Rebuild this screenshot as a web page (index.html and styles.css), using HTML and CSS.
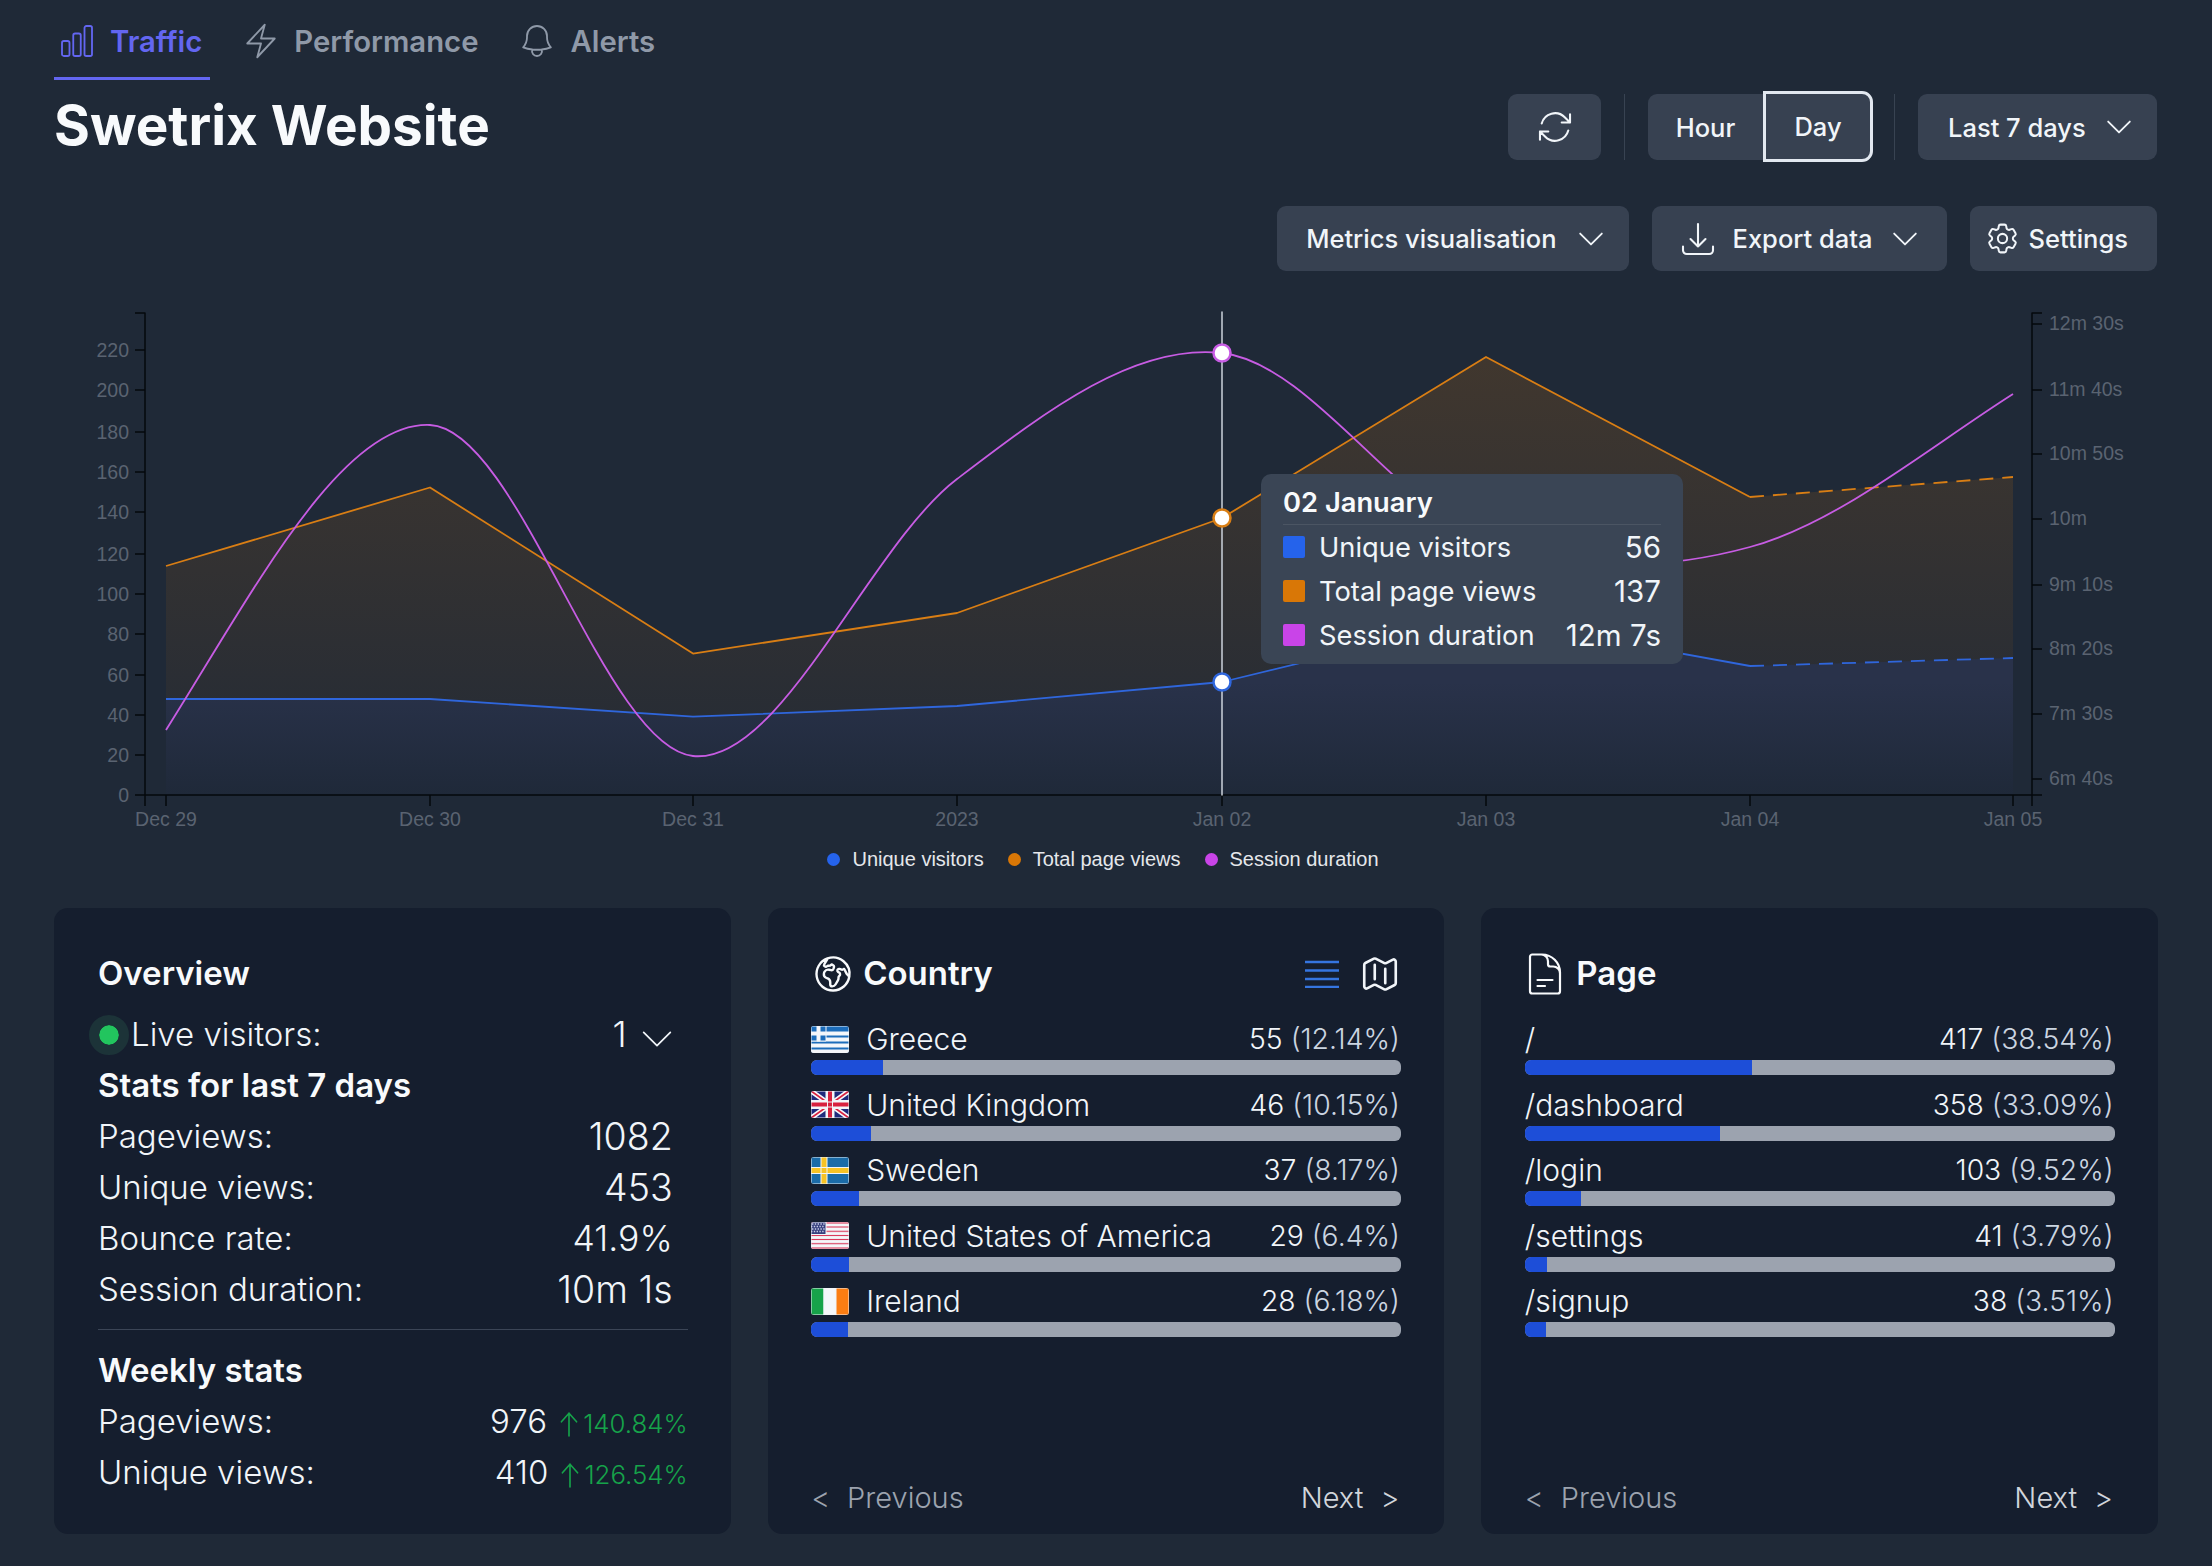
FILE: index.html
```html
<!DOCTYPE html>
<html lang="en">
<head>
    <meta charset="UTF-8">
    <title>Swetrix Website</title>
    <link rel="stylesheet" href="styles.css">
</head>
<body>
    <nav class="tabs">
        <a class="tab tab-active">
            <svg class="tab-icon" viewBox="0 0 24 24"><path d="M3 13.125C3 12.504 3.504 12 4.125 12h2.25c.621 0 1.125.504 1.125 1.125v6.75C7.5 20.496 6.996 21 6.375 21h-2.25A1.125 1.125 0 013 19.875v-6.75zM9.75 8.625c0-.621.504-1.125 1.125-1.125h2.25c.621 0 1.125.504 1.125 1.125v11.25c0 .621-.504 1.125-1.125 1.125h-2.25a1.125 1.125 0 01-1.125-1.125V8.625zM16.5 4.125c0-.621.504-1.125 1.125-1.125h2.25C20.496 3 21 3.504 21 4.125v15.75c0 .621-.504 1.125-1.125 1.125h-2.25a1.125 1.125 0 01-1.125-1.125V4.125z"/></svg>
            Traffic
        </a>
        <a class="tab">
            <svg class="tab-icon" viewBox="0 0 24 24"><path d="M3.75 13.5l10.5-11.25L12 10.5h8.25L9.75 21.75 12 13.5H3.75z"/></svg>
            Performance
        </a>
        <a class="tab">
            <svg class="tab-icon" viewBox="0 0 24 24"><path d="M14.857 17.082a23.848 23.848 0 005.454-1.31A8.967 8.967 0 0118 9.75v-.7V9A6 6 0 006 9v.75a8.967 8.967 0 01-2.312 6.022c1.733.64 3.56 1.085 5.455 1.31m5.714 0a24.255 24.255 0 01-5.714 0m5.714 0a3 3 0 11-5.714 0"/></svg>
            Alerts
        </a>
    </nav>

    <header class="title-row">
        <h1>Swetrix Website</h1>
        <div class="toolbar">
            <button class="btn btn-refresh">
                <svg class="icon-refresh" viewBox="0 0 24 24"><path d="M16.023 9.348h4.992v-.001M2.985 19.644v-4.992m0 0h4.992m-4.993 0l3.181 3.183a8.25 8.25 0 0013.803-3.7M4.031 9.865a8.25 8.25 0 0113.803-3.7l3.181 3.182m0-4.991v4.99"/></svg>
            </button>
            <span class="divider"></span>
            <div class="btn-group">
                <button class="btn btn-hour">Hour</button>
                <button class="btn btn-day">Day</button>
            </div>
            <span class="divider divider-right"></span>
            <button class="btn btn-select">Last 7 days
                <svg class="chevron" viewBox="0 0 24 24"><path d="M22 7L12 17 2 7"/></svg>
            </button>
        </div>
    </header>

    <div class="actions">
        <button class="btn btn-metrics">Metrics visualisation
            <svg class="chevron" viewBox="0 0 24 24"><path d="M22 7L12 17 2 7"/></svg>
        </button>
        <button class="btn btn-export">
            <svg class="icon-export" viewBox="0 0 24 24"><path d="M3 16.5v2.25A2.25 2.25 0 005.25 21h13.5A2.25 2.25 0 0021 18.75V16.5M16.5 12L12 16.5m0 0L7.5 12m4.5 4.5V3"/></svg>
            Export data
            <svg class="chevron chevron-export" viewBox="0 0 24 24"><path d="M22 7L12 17 2 7"/></svg>
        </button>
        <button class="btn btn-settings">
            <svg class="icon-settings" viewBox="0 0 24 24"><path d="M9.594 3.94c.09-.542.56-.94 1.11-.94h2.593c.55 0 1.02.398 1.11.94l.213 1.281c.063.374.313.686.645.87.074.04.147.083.22.127.324.196.72.257 1.075.124l1.217-.456a1.125 1.125 0 011.37.49l1.296 2.247a1.125 1.125 0 01-.26 1.431l-1.003.827c-.293.24-.438.613-.431.992a6.759 6.759 0 010 .255c-.007.378.138.75.43.99l1.005.828c.424.35.534.954.26 1.43l-1.298 2.247a1.125 1.125 0 01-1.369.491l-1.217-.456c-.355-.133-.75-.072-1.076.124a6.57 6.57 0 01-.22.128c-.331.183-.581.495-.644.869l-.213 1.28c-.09.543-.56.941-1.11.941h-2.594c-.55 0-1.02-.398-1.11-.94l-.213-1.281c-.062-.374-.312-.686-.644-.87a6.52 6.52 0 01-.22-.127c-.325-.196-.72-.257-1.076-.124l-1.217.456a1.125 1.125 0 01-1.369-.49l-1.297-2.247a1.125 1.125 0 01.26-1.431l1.004-.827c.292-.24.437-.613.43-.992a6.932 6.932 0 010-.255c.007-.378-.138-.75-.43-.99l-1.004-.828a1.125 1.125 0 01-.26-1.43l1.297-2.247a1.125 1.125 0 011.37-.491l1.216.456c.356.133.751.072 1.076-.124.072-.044.146-.087.22-.128.332-.183.582-.495.644-.869l.214-1.281z"/><path d="M15 12a3 3 0 11-6 0 3 3 0 016 0z"/></svg>
            Settings
        </button>
    </div>

    <section class="chart">
        <svg class="chart-svg" viewBox="54 285 2104 560">
            <defs>
                <linearGradient id="area-orange" gradientUnits="userSpaceOnUse" x1="0" y1="357" x2="0" y2="795">
                    <stop offset="0" stop-color="#d97706" stop-opacity="0.18"/>
                    <stop offset="1" stop-color="#d97706" stop-opacity="0.02"/>
                </linearGradient>
                <linearGradient id="area-blue" gradientUnits="userSpaceOnUse" x1="0" y1="682" x2="0" y2="795">
                    <stop offset="0" stop-color="#29324a"/>
                    <stop offset="1" stop-color="#1f2939"/>
                </linearGradient>
            </defs>

            <path class="area" fill="url(#area-orange)" d="M166 566L430 487.5 693 653.6 957 613 1222 518 1486 357 1750 497 2013 477V795H166Z"/>
            <path class="area" fill="url(#area-blue)" d="M166 699L430 699 693 716.7 957 706 1222 682 1486 618 1750 666 2013 658V795H166Z"/>

            <path class="axis" d="M135 313H145V795H135M135 350H145M135 390H145M135 432H145M135 472H145M135 512H145M135 554H145M135 594H145M135 634H145M135 675H145M135 715H145M135 755H145"/>
            <path class="axis" d="M2042 313H2032V806M2042 324H2032M2042 390H2032M2042 454H2032M2042 519H2032M2042 585H2032M2042 649H2032M2042 714H2032M2042 779H2032M2042 795H145V806"/>
            <path class="axis" d="M166 795V806M430 795V806M693 795V806M957 795V806M1222 795V806M1486 795V806M1750 795V806M2013 795V806"/>

            <g class="tick-label tick-left">
                <text x="129" y="357">220</text>
                <text x="129" y="397">200</text>
                <text x="129" y="439">180</text>
                <text x="129" y="479">160</text>
                <text x="129" y="519">140</text>
                <text x="129" y="561">120</text>
                <text x="129" y="601">100</text>
                <text x="129" y="641">80</text>
                <text x="129" y="682">60</text>
                <text x="129" y="722">40</text>
                <text x="129" y="762">20</text>
                <text x="129" y="802">0</text>
            </g>
            <g class="tick-label">
                <text x="2049" y="330">12m 30s</text>
                <text x="2049" y="396">11m 40s</text>
                <text x="2049" y="460">10m 50s</text>
                <text x="2049" y="525">10m</text>
                <text x="2049" y="591">9m 10s</text>
                <text x="2049" y="655">8m 20s</text>
                <text x="2049" y="720">7m 30s</text>
                <text x="2049" y="785">6m 40s</text>
            </g>
            <g class="tick-label tick-bottom">
                <text x="166" y="826">Dec 29</text>
                <text x="430" y="826">Dec 30</text>
                <text x="693" y="826">Dec 31</text>
                <text x="957" y="826">2023</text>
                <text x="1222" y="826">Jan 02</text>
                <text x="1486" y="826">Jan 03</text>
                <text x="1750" y="826">Jan 04</text>
                <text x="2013" y="826">Jan 05</text>
            </g>

            <path class="line line-orange" d="M166 566L430 487.5 693 653.6 957 613 1222 518 1486 357 1750 497"/>
            <path class="line line-orange line-dash" d="M1750 497L2013 477"/>
            <path class="line line-blue" d="M166 699L430 699 693 716.7 957 706 1222 682 1486 618 1750 666"/>
            <path class="line line-blue line-dash" d="M1750 666L2013 658"/>
            <path class="line line-purple" d="M166 730C254 590 342 421 430 425C518 429 605 747 693 756C781 765 869 546 957 479C1045 412 1134 343 1222 353C1310 363 1398 508 1486 540C1574 572 1662 571 1750 547C1838 523 1925 450 2013 394"/>

            <path class="guide" d="M1222 312V795"/>
            <circle class="point point-purple" cx="1222" cy="353" r="8.5"/>
            <circle class="point point-orange" cx="1222" cy="518" r="8.5"/>
            <circle class="point point-blue" cx="1222" cy="682" r="8.5"/>
        </svg>

        <div class="tooltip">
            <div class="tooltip-title">02 January</div>
            <div class="tooltip-row"><i class="swatch swatch-blue"></i><span class="tooltip-name">Unique visitors</span><span class="tooltip-value">56</span></div>
            <div class="tooltip-row"><i class="swatch swatch-orange"></i><span class="tooltip-name">Total page views</span><span class="tooltip-value">137</span></div>
            <div class="tooltip-row"><i class="swatch swatch-purple"></i><span class="tooltip-name">Session duration</span><span class="tooltip-value">12m 7s</span></div>
        </div>

        <div class="legend">
            <span class="legend-item"><i class="legend-dot swatch-blue"></i>Unique visitors</span>
            <span class="legend-item"><i class="legend-dot swatch-orange"></i>Total page views</span>
            <span class="legend-item"><i class="legend-dot swatch-purple"></i>Session duration</span>
        </div>
    </section>

    <main class="cards">
        <section class="card card-overview">
            <h2 class="card-title">Overview</h2>
            <div class="stat stat-live">
                <span class="live-label"><span class="live-dot"></span>Live visitors:</span>
                <span class="live-value">1
                    <svg class="chevron chevron-live" viewBox="0 0 24 24"><path d="M22 7L12 17 2 7"/></svg>
                </span>
            </div>
            <h3 class="stat-heading">Stats for last 7 days</h3>
            <div class="stat"><span>Pageviews:</span><span class="stat-value">1082</span></div>
            <div class="stat"><span>Unique views:</span><span class="stat-value">453</span></div>
            <div class="stat"><span>Bounce rate:</span><span class="stat-value stat-value-rate">41.9%</span></div>
            <div class="stat"><span>Session duration:</span><span class="stat-value">10m 1s</span></div>
            <hr class="rule">
            <h3 class="stat-heading">Weekly stats</h3>
            <div class="stat stat-weekly">
                <span>Pageviews:</span>
                <span class="weekly-value">976
                    <span class="growth"><svg class="arrow-up" viewBox="0 0 18 24"><path d="M2 10L9 2l7 8M9 2v21"/></svg>140.84%</span>
                </span>
            </div>
            <div class="stat stat-weekly">
                <span>Unique views:</span>
                <span class="weekly-value">410
                    <span class="growth"><svg class="arrow-up" viewBox="0 0 18 24"><path d="M2 10L9 2l7 8M9 2v21"/></svg>126.54%</span>
                </span>
            </div>
        </section>

        <section class="card">
            <div class="card-head">
                <h2 class="card-title">
                    <svg class="head-icon" viewBox="0 0 24 24"><path d="M20.893 13.393l-1.135-1.135a2.252 2.252 0 01-.421-.585l-1.08-2.16a.414.414 0 00-.663-.107.827.827 0 01-.812.21l-1.273-.363a.89.89 0 00-.738 1.595l.587.39c.59.395.674 1.23.172 1.732l-.2.2c-.212.212-.33.498-.33.796v.41c0 .409-.11.809-.32 1.158l-1.315 2.191a2.11 2.11 0 01-1.81 1.025 1.055 1.055 0 01-1.055-1.055v-1.172c0-.92-.56-1.747-1.414-2.089l-.655-.261a2.25 2.25 0 01-1.383-2.46l.007-.042a2.25 2.25 0 01.29-.787l.09-.15a2.25 2.25 0 012.37-1.048l1.178.236a1.125 1.125 0 001.302-.795l.208-.73a1.125 1.125 0 00-.578-1.315l-.665-.332-.091.091a2.25 2.25 0 01-1.591.659h-.18c-.249 0-.487.1-.662.274a.931.931 0 01-1.458-1.137l1.411-2.353a2.25 2.25 0 00.286-.76m11.928 9.869A9 9 0 008.965 3.525m11.928 9.868A9 9 0 118.965 3.525"/></svg>
                    Country
                </h2>
                <div class="head-tools">
                    <svg class="tool-list" viewBox="0 0 34 28"><path d="M0 2h34M0 10.500h34M0 19h34M0 27h34"/></svg>
                    <svg class="tool-map" viewBox="0 0 24 24"><path d="M9 6.750V15m6-6v8.250m.503 3.498l4.875-2.437c.381-.19.622-.58.622-1.006V4.820c0-.836-.88-1.380-1.628-1.006l-3.869 1.934c-.317.159-.69.159-1.006 0L9.503 3.252a1.125 1.125 0 00-1.006 0L3.622 5.689C3.240 5.880 3 6.270 3 6.695V19.180c0 .836.88 1.380 1.628 1.006l3.869-1.934c.317-.159.69-.159 1.006 0l4.994 2.497c.317.158.69.158 1.006 0z"/></svg>
                </div>
            </div>
            <div class="list">
                <div class="row">
                    <div class="row-text">
                        <span class="row-name">
                            <svg class="flag" viewBox="0 0 38 27"><rect width="38" height="27" fill="#1c6dbb"/><path fill="#f5f7fa" d="M0 6h38v3H0zM0 12h38v3H0zM0 18h38v3H0zM0 24h38v3H0z"/><path fill="#1c6dbb" d="M0 0h15v15H0z"/><path fill="#f5f7fa" d="M6 0h3v15H6zM0 6h15v3H0z"/></svg>
                            Greece
                        </span>
                        <span class="row-value">55 <em>(12.14%)</em></span>
                    </div>
                    <div class="bar"><div class="bar-fill" style="width: 12.14%"></div></div>
                </div>
                <div class="row">
                    <div class="row-text">
                        <span class="row-name">
                            <svg class="flag" viewBox="0 0 38 27"><rect width="38" height="27" fill="#1f2a7c"/><path stroke="#f5f7fa" stroke-width="5" d="M0 0l38 27M38 0L0 27"/><path stroke="#d8213f" stroke-width="1.800" d="M0 0l38 27M38 0L0 27"/><path fill="#f5f7fa" d="M15 0h8v27h-8zM0 9.500h38v8H0z"/><path fill="#d8213f" d="M16.500 0h5v27h-5zM0 11h38v5H0z"/></svg>
                            United Kingdom
                        </span>
                        <span class="row-value">46 <em>(10.15%)</em></span>
                    </div>
                    <div class="bar"><div class="bar-fill" style="width: 10.15%"></div></div>
                </div>
                <div class="row">
                    <div class="row-text">
                        <span class="row-name">
                            <svg class="flag" viewBox="0 0 38 27"><rect width="38" height="27" fill="#1b6ca8"/><path fill="#f7c325" d="M10 0h6v27h-6zM0 10.500h38v6H0z"/></svg>
                            Sweden
                        </span>
                        <span class="row-value">37 <em>(8.17%)</em></span>
                    </div>
                    <div class="bar"><div class="bar-fill" style="width: 8.17%"></div></div>
                </div>
                <div class="row">
                    <div class="row-text">
                        <span class="row-name">
                            <svg class="flag" viewBox="0 0 38 27"><rect width="38" height="27" fill="#f5f7fa"/><path fill="#d8264a" d="M0 0h38v2H0zM0 4h38v2H0zM0 8.200h38v2H0zM0 12.400h38v2H0zM0 16.600h38v2H0zM0 20.800h38v2H0zM0 25h38v2H0z"/><rect width="15" height="12.500" fill="#37407f"/><path stroke="#c8cde6" stroke-width="1.400" stroke-dasharray="1.400 1.400" d="M1 2h14M0 4.500h14M1 7h14M0 9.500h14"/></svg>
                            United States of America
                        </span>
                        <span class="row-value">29 <em>(6.4%)</em></span>
                    </div>
                    <div class="bar"><div class="bar-fill" style="width: 6.4%"></div></div>
                </div>
                <div class="row">
                    <div class="row-text">
                        <span class="row-name">
                            <svg class="flag" viewBox="0 0 38 27"><rect width="13" height="27" fill="#17a34a"/><rect x="13" width="12" height="27" fill="#f5f7fa"/><rect x="25" width="13" height="27" fill="#fb7d12"/></svg>
                            Ireland
                        </span>
                        <span class="row-value">28 <em>(6.18%)</em></span>
                    </div>
                    <div class="bar"><div class="bar-fill" style="width: 6.18%"></div></div>
                </div>
            </div>
            <div class="pager">
                <span class="pager-prev"><span class="pager-mark">&lt;</span>Previous</span>
                <span class="pager-next">Next<span class="pager-mark">&gt;</span></span>
            </div>
        </section>

        <section class="card">
            <div class="card-head">
                <h2 class="card-title card-title-page">
                    <svg class="head-icon-page" viewBox="0 0 24 24"><path d="M19.500 14.250v-2.625a3.375 3.375 0 00-3.375-3.375h-1.500A1.125 1.125 0 0113.500 7.125v-1.500a3.375 3.375 0 00-3.375-3.375H8.250m0 12.750h7.500m-7.500 3H12M10.500 2.250H5.625c-.621 0-1.125.504-1.125 1.125v17.250c0 .621.504 1.125 1.125 1.125h12.750c.621 0 1.125-.504 1.125-1.125V11.250a9 9 0 00-9-9z"/></svg>
                    Page
                </h2>
            </div>
            <div class="list">
                <div class="row">
                    <div class="row-text"><span class="row-name">/</span><span class="row-value">417 <em>(38.54%)</em></span></div>
                    <div class="bar"><div class="bar-fill" style="width: 38.54%"></div></div>
                </div>
                <div class="row">
                    <div class="row-text"><span class="row-name">/dashboard</span><span class="row-value">358 <em>(33.09%)</em></span></div>
                    <div class="bar"><div class="bar-fill" style="width: 33.09%"></div></div>
                </div>
                <div class="row">
                    <div class="row-text"><span class="row-name">/login</span><span class="row-value">103 <em>(9.52%)</em></span></div>
                    <div class="bar"><div class="bar-fill" style="width: 9.52%"></div></div>
                </div>
                <div class="row">
                    <div class="row-text"><span class="row-name">/settings</span><span class="row-value">41 <em>(3.79%)</em></span></div>
                    <div class="bar"><div class="bar-fill" style="width: 3.79%"></div></div>
                </div>
                <div class="row">
                    <div class="row-text"><span class="row-name">/signup</span><span class="row-value">38 <em>(3.51%)</em></span></div>
                    <div class="bar"><div class="bar-fill" style="width: 3.51%"></div></div>
                </div>
            </div>
            <div class="pager">
                <span class="pager-prev"><span class="pager-mark">&lt;</span>Previous</span>
                <span class="pager-next">Next<span class="pager-mark">&gt;</span></span>
            </div>
        </section>
    </main>
</body>
</html>
```

FILE: styles.css
```css
* {
    box-sizing: border-box;
}
body {
    margin: 0;
    padding: 0 54px;
    min-height: 1566px;
    background-color: #1f2937;
    color: #f1f5f9;
    font-family: Inter, "Noto Sans", sans-serif;
}
svg {
    fill: none;
    stroke: currentColor;
    stroke-linecap: round;
    stroke-linejoin: round;
    flex-shrink: 0;
}

/* Tabs */
.tabs {
    display: flex;
    gap: 28px;
    height: 80px;
}
.tab {
    display: flex;
    align-items: center;
    gap: 18px;
    height: 80px;
    padding: 5px 8px 0;
    border-bottom: 3px solid transparent;
    color: #8f99a8;
    font-size: 29.3px;
    font-weight: 600;
}
.tab-active {
    color: #6366f1;
    border-bottom-color: #6366f1;
}
.tab-icon {
    width: 40px;
    height: 40px;
    stroke-width: 1.1;
    margin: 0 -5px;
}

/* Title and toolbar */
.title-row {
    display: flex;
    justify-content: space-between;
    margin-top: 14px;
}
h1 {
    margin: 0;
    font-size: 54.8px;
    line-height: 62px;
    font-weight: 700;
    color: #f8fafc;
}
.toolbar {
    display: flex;
    align-items: center;
    margin-right: 1px;
}
.btn {
    display: flex;
    align-items: center;
    height: 66px;
    padding: 0;
    border: none;
    border-radius: 9px;
    background-color: #374151;
    color: #f1f5f9;
    font-family: inherit;
    font-size: 25.5px;
    font-weight: 450;
}
.btn-refresh {
    justify-content: center;
    width: 93px;
}
.icon-refresh {
    width: 40px;
    height: 40px;
    stroke-width: 1.25;
}
.divider {
    width: 1px;
    height: 66px;
    margin: 0 23px;
    background-color: #384352;
}
.divider-right {
    margin: 0 23px 0 21px;
}
.btn-group {
    display: flex;
}
.btn-hour {
    justify-content: center;
    width: 115px;
    border-radius: 9px 0 0 9px;
}
.btn-day {
    justify-content: center;
    width: 110px;
    height: 71px;
    margin: -3px 0;
    border: 3px solid #e2e8f0;
    border-radius: 0 11px 11px 0;
}
.btn-select {
    width: 239px;
    padding: 0 25px 0 30px;
    justify-content: space-between;
}
.chevron {
    width: 26px;
    height: 26px;
    stroke-width: 1.7;
}

.actions {
    display: flex;
    justify-content: flex-end;
    gap: 23px;
    margin-top: 46px;
    margin-right: 1px;
}
.actions .btn {
    height: 65px;
}
.btn-metrics {
    gap: 21px;
    padding: 0 25px 0 29px;
}
.btn-export {
    padding: 0 29px 0 26px;
}
.icon-export {
    width: 40px;
    height: 40px;
    margin-right: 15px;
    stroke-width: 1.25;
}
.chevron-export {
    margin-left: 19px;
}
.btn-settings {
    padding: 0 29px 0 14.5px;
}
.icon-settings {
    width: 37px;
    height: 37px;
    margin-right: 7.5px;
    stroke-width: 1.3;
}

/* Chart */
.chart {
    position: relative;
    margin-top: 14px;
}
.chart-svg {
    display: block;
    width: 2104px;
    height: 560px;
}
.area {
    stroke: none;
}
.axis {
    stroke: #05080d;
    stroke-width: 1.5;
    stroke-linecap: butt;
}
.tick-label {
    font-family: "Liberation Sans", Arial, sans-serif;
    font-size: 19.5px;
    fill: #5a6371;
    stroke: none;
}
.tick-left {
    text-anchor: end;
}
.tick-bottom {
    text-anchor: middle;
}
.line {
    stroke-width: 1.8;
    stroke-linecap: butt;
}
.line-orange {
    stroke: #d97e14;
}
.line-blue {
    stroke: #2f66dc;
}
.line-purple {
    stroke: #c75ce3;
}
.line-dash {
    stroke-dasharray: 14 9;
}
.guide {
    stroke: #cdd3dc;
    stroke-width: 1.5;
}
.point {
    fill: #ffffff;
    stroke-width: 2.5;
}
.point-purple {
    stroke: #c75ce3;
}
.point-orange {
    stroke: #d97e14;
}
.point-blue {
    stroke: #2f66dc;
}
.tooltip {
    position: absolute;
    left: 1207px;
    top: 189px;
    width: 422px;
    height: 190px;
    padding: 14px 22px 0 22px;
    border-radius: 10px;
    background-color: #3a4555;
    font-size: 27.3px;
}
.tooltip-title {
    height: 37px;
    line-height: 30px;
    border-bottom: 1px solid #4b5563;
    font-weight: 600;
    color: #f8fafc;
}
.tooltip-row {
    display: flex;
    align-items: center;
    height: 44px;
}
.tooltip-name {
    flex: 1;
    margin-left: 14px;
}
.tooltip-value {
    font-size: 29.5px;
}
.swatch {
    width: 22px;
    height: 22px;
    border-radius: 2px;
}
.swatch-blue {
    background-color: #2563eb;
}
.swatch-orange {
    background-color: #d97706;
}
.swatch-purple {
    background-color: #c944e8;
}
.legend {
    display: flex;
    justify-content: center;
    gap: 24px;
    height: 28px;
    padding-right: 6px;
    font-family: "Liberation Sans", Arial, sans-serif;
    font-size: 20px;
    line-height: 28px;
    color: #e5e7eb;
}
.legend-item {
    display: flex;
    align-items: center;
    gap: 12px;
}
.legend-dot {
    width: 13px;
    height: 13px;
    border-radius: 50%;
}

/* Cards */
.cards {
    display: grid;
    grid-template-columns: 1fr 1fr 1fr;
    gap: 37px;
    margin-top: 35px;
}
.card {
    display: flex;
    flex-direction: column;
    padding: 40px 43.5px 16px;
    border-radius: 14px;
    background-color: #151e2e;
    font-size: 33px;
    font-weight: 300;
    line-height: 51px;
}
.card-overview {
    padding: 40px 43px 36px 44px;
}
.card-title {
    display: flex;
    align-items: center;
    gap: 8px;
    margin: 0;
    font-size: 33px;
    font-weight: 600;
    line-height: 51px;
    color: #f8fafc;
}
.stat-heading {
    margin: 0;
    font-size: 33px;
    font-weight: 600;
    line-height: 51px;
    color: #f8fafc;
}
.stat {
    display: flex;
    justify-content: space-between;
    padding-right: 15px;
}
.stat-value {
    font-size: 37.5px;
}
.stat-value-rate {
    font-size: 35.5px;
}
.stat-live {
    margin-top: 10px;
}
.live-label {
    display: flex;
    align-items: center;
    gap: 2px;
    margin-left: -9px;
}
.live-dot {
    width: 40px;
    height: 40px;
    border-radius: 50%;
    border: 10.5px solid #1c3338;
    background-color: #22c55e;
    background-clip: padding-box;
}
.live-value {
    display: flex;
    align-items: center;
    gap: 14px;
    font-size: 36px;
}
.chevron-live {
    width: 32px;
    height: 32px;
    margin-top: 8px;
    stroke-width: 1.3;
}
.rule {
    width: 100%;
    height: 1px;
    margin: 14px 0 15px;
    border: none;
    background-color: #3b4556;
}
.stat-weekly {
    padding-right: 0;
}
.weekly-value {
    display: flex;
    align-items: center;
    gap: 12px;
}
.growth {
    display: flex;
    align-items: center;
    gap: 4px;
    position: relative;
    top: 2px;
    color: #16a34a;
    font-size: 25.8px;
}
.arrow-up {
    width: 20px;
    height: 26px;
    stroke-width: 1.5;
}

.card-head {
    display: flex;
    justify-content: space-between;
    align-items: center;
    height: 51px;
    margin-bottom: 10.5px;
}
.head-icon {
    width: 44px;
    height: 44px;
    stroke-width: 1.3;
}
.card-title-page {
    gap: 7px;
}
.head-icon-page {
    width: 48px;
    height: 48px;
    margin-left: -3.5px;
    stroke-width: 1.1;
}
.head-tools {
    display: flex;
    align-items: center;
    gap: 23px;
    margin-right: 3px;
}
.tool-list {
    width: 34px;
    height: 28px;
    stroke: #3575e0;
    stroke-width: 2.5;
    stroke-linecap: butt;
}
.tool-map {
    width: 42px;
    height: 42px;
    stroke-width: 1.5;
    margin: 0 -3px;
}
.row {
    padding-top: 8.5px;
}
.row-text {
    display: flex;
    justify-content: space-between;
    align-items: center;
    height: 42px;
    padding-right: 1px;
    font-size: 30px;
    line-height: 42px;
}
.row-name {
    display: flex;
    align-items: center;
    gap: 17px;
    font-weight: 350;
}
.flag {
    width: 38px;
    height: 27px;
    border-radius: 3px;
}
.flag path, .flag rect {
    stroke-linecap: butt;
}
.row-value {
    font-size: 28.3px;
    font-weight: 350;
}
.row-value em {
    font-style: normal;
    font-weight: 300;
    color: #cbd5e1;
}
.bar {
    height: 15px;
    overflow: hidden;
    border-radius: 6px;
    background-color: #9ca3af;
}
.bar-fill {
    height: 100%;
    background-color: #1d4ed8;
}
.pager {
    display: flex;
    justify-content: space-between;
    margin-top: auto;
    padding-right: 1.5px;
    font-size: 29px;
    line-height: 40px;
}
.pager-prev {
    color: #9ca3af;
}
.pager-next {
    color: #d1d5db;
}
.pager-mark {
    margin-right: 17px;
}
.pager-next .pager-mark {
    margin: 0 0 0 17px;
}
```
